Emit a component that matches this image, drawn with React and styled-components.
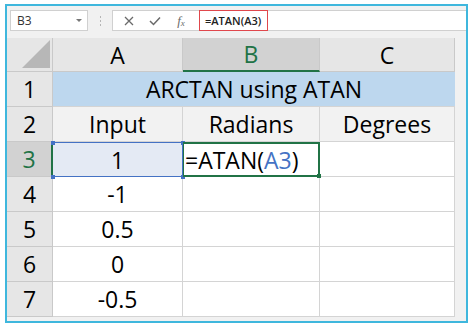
import React from 'react';
import styled, { createGlobalStyle } from 'styled-components';

const GlobalStyle = createGlobalStyle`
  html, body {
    margin: 0;
    padding: 0;
    background: #ffffff;
  }
  * {
    box-sizing: border-box;
  }
`;

const Page = styled.div`
  width: 474px;
  height: 330px;
  padding: 4px 0 0 5px;
  background: #ffffff;
`;

const Frame = styled.div`
  width: 463px;
  height: 319px;
  border: 2px solid #3fb7dd;
  background: #f1f1f1;
  display: flex;
  flex-direction: column;
  overflow: hidden;
`;

const Toolbar = styled.div`
  height: 32px;
  display: flex;
  align-items: flex-start;
  padding: 4px 0 0 3px;
`;

const NameBox = styled.div`
  width: 78px;
  height: 21px;
  background: #ffffff;
  border: 1px solid #d0d0d0;
  display: flex;
  align-items: center;
  justify-content: space-between;
  padding: 0 5px 0 6px;
  font-family: 'Open Sans', sans-serif;
  font-size: 12px;
  color: #333;
`;

const Caret = styled.span`
  width: 0;
  height: 0;
  border-left: 3px solid transparent;
  border-right: 3px solid transparent;
  border-top: 3px solid #777;
`;

const Dots = styled.div`
  width: 24px;
  height: 21px;
  display: flex;
  flex-direction: column;
  align-items: center;
  justify-content: center;
  gap: 2px;
  span {
    width: 1px;
    height: 2px;
    background: #b5b5b5;
  }
`;

const FormulaBox = styled.div`
  flex: 1;
  height: 21px;
  background: #ffffff;
  border: 1px solid #d0d0d0;
  border-right: none;
  display: flex;
  align-items: center;
`;

const IconSlot = styled.div`
  width: 26px;
  height: 19px;
  display: flex;
  align-items: center;
  justify-content: center;
  color: #6a6a6a;
`;

const Fx = styled.span`
  font-family: 'Liberation Serif', serif;
  font-style: italic;
  font-size: 13px;
  color: #6a6a6a;
  sub {
    font-size: 9px;
    vertical-align: -1px;
  }
`;

const FormulaText = styled.div`
  margin-left: 5px;
  height: 21px;
  margin-top: -1px;
  margin-bottom: -1px;
  padding: 0 6px 0 5px;
  border: 1px solid #e0474c;
  display: flex;
  align-items: center;
  font-family: 'Open Sans', sans-serif;
  font-weight: 600;
  font-size: 11px;
  color: #222;
`;

const Sheet = styled.div`
  display: grid;
  grid-template-columns: 46px 130px 137px 135px;
  grid-template-rows: 34px repeat(7, 35px);
  width: 448px;
  font-family: 'Open Sans', sans-serif;
  font-size: 23px;
  color: #000;
`;

const Corner = styled.div`
  background: #e6e6e6;
  border-right: 1px solid #c9c9c9;
  border-bottom: 1px solid #c9c9c9;
  display: flex;
  align-items: flex-end;
  justify-content: flex-end;
  padding: 0 2px 3px 0;
`;

const ColHead = styled.div`
  background: ${(p) => (p.active ? '#d2d2d2' : '#e6e6e6')};
  color: ${(p) => (p.active ? '#217346' : '#000')};
  border-right: 1px solid #c9c9c9;
  border-bottom: ${(p) => (p.active ? '2px solid #217346' : '1px solid #c9c9c9')};
  display: flex;
  align-items: center;
  justify-content: center;
`;

const RowHead = styled.div`
  background: ${(p) => (p.active ? '#d2d2d2' : '#e6e6e6')};
  color: ${(p) => (p.active ? '#217346' : '#000')};
  border-right: ${(p) => (p.active ? '2px solid #217346' : '1px solid #c9c9c9')};
  border-bottom: 1px solid #c9c9c9;
  display: flex;
  align-items: center;
  justify-content: center;
`;

const Cell = styled.div`
  background: #ffffff;
  border-right: 1px solid #d4d4d4;
  border-bottom: 1px solid #d4d4d4;
  display: flex;
  align-items: center;
  justify-content: center;
  white-space: nowrap;
`;

const TitleCell = styled(Cell)`
  grid-column: span 3;
  background: #bdd7ee;
  border-right: none;
`;

const HeaderCell = styled(Cell)`
  background: #f2f2f2;
`;

const RefCell = styled(Cell)`
  position: relative;
  background: #e4eaf4;
  border: 1px solid #4472c4;
  border-left: none;
`;

const ActiveCell = styled(Cell)`
  position: relative;
  justify-content: flex-start;
  padding-left: 1px;
  border: 2px solid #217346;
  border-left: 1px solid #217346;
`;

const Handle = styled.span`
  position: absolute;
  width: 4px;
  height: 4px;
  background: ${(p) => p.color};
  ${(p) => (p.top ? 'top: -2px;' : 'bottom: -3px;')}
  ${(p) => (p.left ? 'left: -2px;' : 'right: -3px;')}
`;

const Ref = styled.span`
  color: #4472c4;
`;

const rows = [
  { n: 4, v: '-1' },
  { n: 5, v: '0.5' },
  { n: 6, v: '0' },
  { n: 7, v: '-0.5' },
];

const App = () => {
  return (
    <Page>
      <GlobalStyle />
      <Frame>
        <Toolbar>
          <NameBox>
            B3
            <Caret />
          </NameBox>
          <Dots>
            <span />
            <span />
            <span />
          </Dots>
          <FormulaBox>
            <IconSlot style={{ marginLeft: 3 }}>
              <svg width="10" height="10" viewBox="0 0 10 10">
                <path d="M1 1 L9 9 M9 1 L1 9" stroke="#6a6a6a" strokeWidth="1.3" />
              </svg>
            </IconSlot>
            <IconSlot>
              <svg width="12" height="10" viewBox="0 0 12 10">
                <path d="M1 5 L4.5 8.5 L11 1.5" stroke="#6a6a6a" strokeWidth="1.5" fill="none" />
              </svg>
            </IconSlot>
            <IconSlot>
              <Fx>
                f<sub>x</sub>
              </Fx>
            </IconSlot>
            <FormulaText>=ATAN(A3)</FormulaText>
          </FormulaBox>
        </Toolbar>
        <Sheet>
          <Corner>
            <svg width="28" height="28" viewBox="0 0 28 28">
              <polygon points="28,0 28,28 0,28" fill="#b7b7b7" />
            </svg>
          </Corner>
          <ColHead>A</ColHead>
          <ColHead active>B</ColHead>
          <ColHead>C</ColHead>

          <RowHead>1</RowHead>
          <TitleCell>ARCTAN using ATAN</TitleCell>

          <RowHead>2</RowHead>
          <HeaderCell>Input</HeaderCell>
          <HeaderCell>Radians</HeaderCell>
          <HeaderCell>Degrees</HeaderCell>

          <RowHead active>3</RowHead>
          <RefCell>
            1
            <Handle color="#4472c4" top left />
            <Handle color="#4472c4" top />
            <Handle color="#4472c4" left />
            <Handle color="#4472c4" />
          </RefCell>
          <ActiveCell>
            =ATAN(<Ref>A3</Ref>)
            <Handle color="#217346" />
          </ActiveCell>
          <Cell />

          {rows.map((r) => (
            <React.Fragment key={r.n}>
              <RowHead>{r.n}</RowHead>
              <Cell>{r.v}</Cell>
              <Cell />
              <Cell />
            </React.Fragment>
          ))}
        </Sheet>
      </Frame>
    </Page>
  );
};

export default App;
